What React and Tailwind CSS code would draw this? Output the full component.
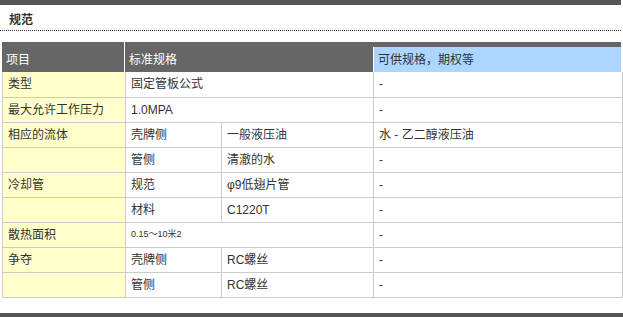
import React from 'react';

const ROWS = [
  { item: '类型', spec: '固定管板公式', opt: '-' },
  { item: '最大允许工作压力', spec: '1.0MPA', opt: '-' },
  { item: '相应的流体', side: '壳牌侧', spec: '一般液压油', opt: '水 - 乙二醇液压油' },
  { item: '', side: '管侧', spec: '清澈的水', opt: '-' },
  { item: '冷却管', side: '规范', spec: 'φ9低翅片管', opt: '-' },
  { item: '', side: '材料', spec: 'C1220T', opt: '-' },
  { item: '散热面积', spec: '0.15～10米2', small: true, opt: '-' },
  { item: '争夺', side: '壳牌侧', spec: 'RC螺丝', opt: '-' },
  { item: '', side: '管侧', spec: 'RC螺丝', opt: '-' },
];

const td = 'h-[25px] border border-[#ccc] pl-[5px] py-0 align-middle';

function App() {
  return (
    <div className="w-[623px] h-[317px] bg-white text-[12px] text-[#333] font-['Liberation_Sans','Noto_Sans_CJK_SC',sans-serif] flex flex-col">
      <div className="h-[5px] w-[621px] bg-[#555]" />
      <div className="w-[621px] h-[26px] border-b border-dotted border-[#333] pl-[9px] pt-[7px] leading-[16px] font-bold text-[#333]">
        规范
      </div>

      <div className="mt-[11px] ml-[2px] w-[619px] h-[30px] bg-[#666] flex text-white">
        <div className="w-[123px] border-r border-white pl-[4px] pt-[10px] leading-[16px]">项目</div>
        <div className="w-[248px] pl-[4px] pt-[10px] leading-[16px]">标准规格</div>
        <div className="flex-1 mt-[5px] bg-[#acd6ff] border-l border-white pl-[4px] pt-[5px] leading-[16px] text-[#333]">
          可供规格，期权等
        </div>
      </div>

      <table className="ml-[2px] w-[620px] border-collapse table-fixed">
        <colgroup>
          <col className="w-[123px]" />
          <col className="w-[96px]" />
          <col className="w-[152px]" />
          <col className="w-[249px]" />
        </colgroup>
        <tbody>
          {ROWS.map((r, i) => (
            <tr key={i} className={i === 0 ? '[&>td]:border-t-0' : ''}>
              <td className={`${td} bg-[#ffffcc]`}>{r.item}</td>
              {r.side ? (
                <>
                  <td className={td}>{r.side}</td>
                  <td className={td}>{r.spec}</td>
                </>
              ) : (
                <td colSpan={2} className={`${td} ${r.small ? 'text-[9px]' : ''}`}>{r.spec}</td>
              )}
              <td className={td}>{r.opt}</td>
            </tr>
          ))}
        </tbody>
      </table>

      <div className="mt-auto h-[4px] w-full bg-[#555]" />
    </div>
  );
}

export default App;
